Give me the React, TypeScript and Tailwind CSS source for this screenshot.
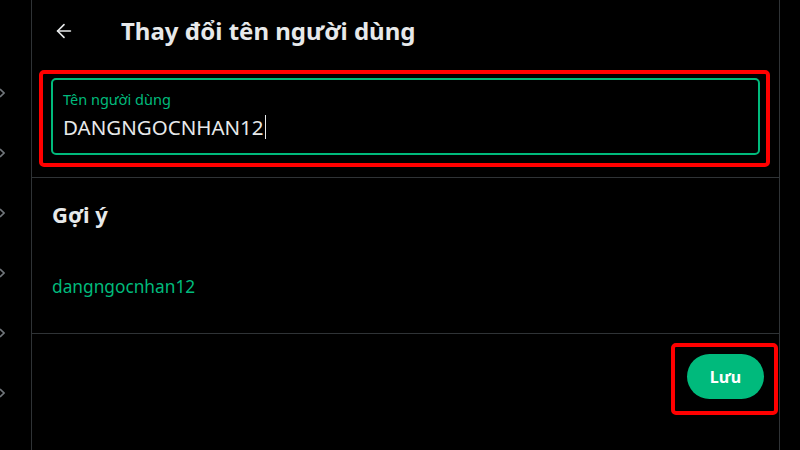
import { ArrowLeft } from 'lucide-react';

const font = { fontFamily: '"Noto Sans", "Open Sans", sans-serif' };

function Chevron() {
  return (
    <svg width="10" height="12" viewBox="0 0 10 12" className="-ml-[5px]">
      <path d="M5 2 L9 6 L5 10" fill="none" stroke="#71767b" strokeWidth="1.6" />
    </svg>
  );
}

export default function App() {
  return (
    <div className="flex h-[450px] w-[800px] overflow-hidden bg-black text-[#e7e9ea]" style={font}>
      {/* left rail, mostly cut off */}
      <div className="flex w-[31px] flex-col gap-[48px] pt-[87px]">
        {[0, 1, 2, 3, 4, 5].map((i) => (
          <Chevron key={i} />
        ))}
      </div>

      <div className="flex w-[749px] flex-col border-x border-[#2f3336]">
        {/* header */}
        <div className="flex h-[62px] items-center">
          <ArrowLeft size={22} strokeWidth={1.8} className="ml-[21px] text-[#e7e9ea]" />
          <h1 className="ml-[46px] text-[24px] font-bold leading-none tracking-[0px]">
            Thay đổi tên người dùng
          </h1>
        </div>

        {/* input */}
        <div className="relative border-b border-[#2f3336] px-[19px] pb-[22px] pt-[16px]">
          <div className="flex h-[77px] flex-col rounded-[5px] border-2 border-[#00ba7c] px-[10px] pt-[10px]">
            <span className="text-[14.5px] leading-[19px] text-[#00ba7c]">Tên người dùng</span>
            <div className="mt-[5px] flex items-center text-[20.5px] leading-[26px]">
              <span>DANGNGOCNHAN12</span>
              <span className="ml-[1px] h-[24px] w-[1px] bg-[#e7e9ea]" />
            </div>
          </div>
          <div className="absolute left-[7px] top-[8px] h-[97px] w-[731px] rounded-[5px] border-4 border-[#ff0000]" />
        </div>

        {/* suggestions */}
        <div className="flex h-[156px] flex-col border-b border-[#2f3336] px-[20px] pt-[22px]">
          <h2 className="text-[22px] font-bold leading-[28px]">Gợi ý</h2>
          <span className="mt-[48px] text-[17.3px] leading-[22px] text-[#00ba7c]">dangngocnhan12</span>
        </div>

        {/* footer */}
        <div className="relative flex justify-end pr-[15px] pt-[20px]">
          <button className="h-[45px] w-[77px] rounded-full bg-[#00ba7c] text-[16px] font-bold text-white">
            Lưu
          </button>
          <div className="absolute right-[1px] top-[9px] h-[72px] w-[107px] rounded-[5px] border-4 border-[#ff0000]" />
        </div>
      </div>
    </div>
  );
}
